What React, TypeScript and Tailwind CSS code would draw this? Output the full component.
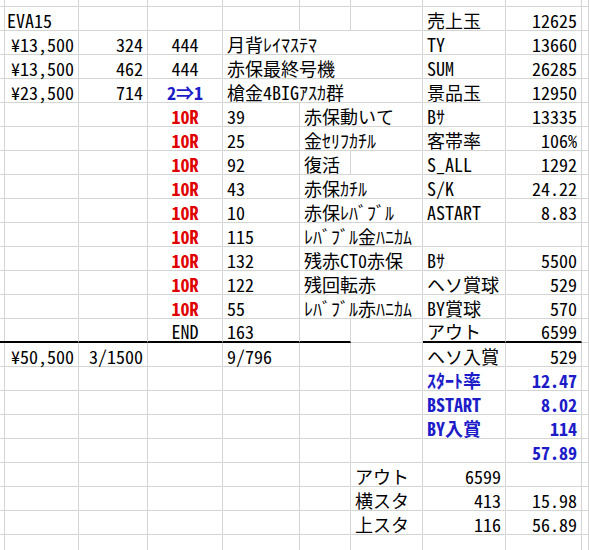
import type { ReactNode } from 'react';

type Align = 'l' | 'r' | 'c';
type CellDef = {
  c: number; // start column index (0-based)
  span?: 1 | 2 | 3;
  text?: ReactNode;
  align?: Align;
  tone?: 'red' | 'blue';
};

const COLS = 10; // pad, A..H, tail
const SPAN = { 1: 'col-span-1', 2: 'col-span-2', 3: 'col-span-3' } as const;

const ROWS: { h: string; cells: CellDef[]; thick?: number[] }[] = [
  { h: 'h-[7px]', cells: [] },
  { h: 'h-[24px]', cells: [{ c: 1, text: 'EVA15', align: 'l' }, { c: 7, text: '売上玉', align: 'l' }, { c: 8, text: '12625' }] },
  {
    h: 'h-[24px]',
    cells: [
      { c: 1, text: '¥13,500' },
      { c: 2, text: '324' },
      { c: 3, text: '444', align: 'c' },
      { c: 4, span: 3, text: '月背ﾚｲﾏｽﾃﾏ', align: 'l' },
      { c: 7, text: 'TY', align: 'l' },
      { c: 8, text: '13660' },
    ],
  },
  {
    h: 'h-[24px]',
    cells: [
      { c: 1, text: '¥13,500' },
      { c: 2, text: '462' },
      { c: 3, text: '444', align: 'c' },
      { c: 4, span: 3, text: '赤保最終号機', align: 'l' },
      { c: 7, text: 'SUM', align: 'l' },
      { c: 8, text: '26285' },
    ],
  },
  {
    h: 'h-[24px]',
    cells: [
      { c: 1, text: '¥23,500' },
      { c: 2, text: '714' },
      { c: 3, text: '2⇒1', align: 'c', tone: 'blue' },
      { c: 4, span: 3, text: '槍金4BIGｱｽｶ群', align: 'l' },
      { c: 7, text: '景品玉', align: 'l' },
      { c: 8, text: '12950' },
    ],
  },
  { h: 'h-[24px]', cells: round('39', '赤保動いて', true, 'Bｻ', '13335') },
  { h: 'h-[24px]', cells: round('25', '金ｾﾘﾌｶﾁﾙ', true, '客帯率', '106%') },
  { h: 'h-[24px]', cells: round('92', '復活', false, 'S_ALL', '1292') },
  { h: 'h-[24px]', cells: round('43', '赤保ｶﾁﾙ', true, 'S/K', '24.22') },
  { h: 'h-[24px]', cells: round('10', '赤保ﾚﾊﾞﾌﾞﾙ', true, 'ASTART', '8.83') },
  { h: 'h-[24px]', cells: round('115', 'ﾚﾊﾞﾌﾞﾙ金ﾊﾆｶﾑ', true, '', '') },
  { h: 'h-[24px]', cells: round('132', '残赤CT0赤保', true, 'Bｻ', '5500') },
  { h: 'h-[24px]', cells: round('122', '残回転赤', true, 'ヘソ賞球', '529') },
  { h: 'h-[24px]', cells: round('55', 'ﾚﾊﾞﾌﾞﾙ赤ﾊﾆｶﾑ', true, 'BY賞球', '570') },
  {
    h: 'h-[24px]',
    thick: [0, 1, 2, 3, 4, 5, 7, 8],
    cells: [
      { c: 3, text: 'END', align: 'c' },
      { c: 4, text: '163', align: 'l' },
      { c: 7, text: 'アウト', align: 'l' },
      { c: 8, text: '6599' },
    ],
  },
  {
    h: 'h-[24px]',
    cells: [
      { c: 1, text: '¥50,500' },
      { c: 2, text: '3/1500' },
      { c: 4, text: '9/796', align: 'l' },
      { c: 7, text: 'ヘソ入賞', align: 'l' },
      { c: 8, text: '529' },
    ],
  },
  { h: 'h-[24px]', cells: [{ c: 7, text: 'ｽﾀｰﾄ率', align: 'l', tone: 'blue' }, { c: 8, text: '12.47', tone: 'blue' }] },
  { h: 'h-[24px]', cells: [{ c: 7, text: 'BSTART', align: 'l', tone: 'blue' }, { c: 8, text: '8.02', tone: 'blue' }] },
  { h: 'h-[24px]', cells: [{ c: 7, text: 'BY入賞', align: 'l', tone: 'blue' }, { c: 8, text: '114', tone: 'blue' }] },
  { h: 'h-[24px]', cells: [{ c: 8, text: '57.89', tone: 'blue' }] },
  { h: 'h-[24px]', cells: [{ c: 6, text: 'アウト', align: 'l' }, { c: 7, text: '6599' }] },
  { h: 'h-[24px]', cells: [{ c: 6, text: '横スタ', align: 'l' }, { c: 7, text: '413' }, { c: 8, text: '15.98' }] },
  { h: 'h-[24px]', cells: [{ c: 6, text: '上スタ', align: 'l' }, { c: 7, text: '116' }, { c: 8, text: '56.89' }] },
  { h: 'h-[24px]', cells: [] },
];

function round(n: string, memo: string, wide: boolean, label: string, val: string): CellDef[] {
  return [
    { c: 3, text: '10R', align: 'c', tone: 'red' },
    { c: 4, text: n, align: 'l' },
    { c: 5, span: wide ? 2 : 1, text: memo, align: 'l' },
    { c: 7, text: label, align: 'l' },
    { c: 8, text: val },
  ];
}

function Row({ h, cells, thick = [] }: { h: string; cells: CellDef[]; thick?: number[] }) {
  // fill the gaps with empty single cells
  const filled: CellDef[] = [];
  let i = 0;
  while (i < COLS) {
    const hit = cells.find((x) => x.c === i);
    if (hit) {
      filled.push(hit);
      i += hit.span ?? 1;
    } else {
      filled.push({ c: i });
      i += 1;
    }
  }

  return (
    <div className={`grid shrink-0 grid-cols-[3px_76px_69px_75px_77px_51px_72px_83px_76px_7px] ${h}`}>
      {filled.map((cell) => {
        const align = cell.align ?? 'r';
        return (
          <div
            key={cell.c}
            className={[
              'flex min-w-0 items-end whitespace-nowrap border-r border-[#d4d4d4]',
              SPAN[cell.span ?? 1],
              thick.includes(cell.c) ? 'border-b-2 border-b-black' : 'border-b',
              align === 'l' ? 'justify-start pl-[4px]' : align === 'c' ? 'justify-center' : 'justify-end pr-[4px]',
              cell.tone === 'red' ? 'font-bold text-[#e00000]' : cell.tone === 'blue' ? 'font-bold text-[#1c1cc8]' : 'text-black',
            ].join(' ')}
          >
            {cell.text}
          </div>
        );
      })}
    </div>
  );
}

export default function App() {
  return (
    <div className="flex h-[550px] w-[589px] flex-col overflow-hidden bg-white font-['Noto_Sans_Mono_CJK_JP','Noto_Sans_CJK_JP',sans-serif] text-[18px] leading-[20px]">
      {ROWS.map((r, idx) => (
        <Row key={idx} h={r.h} cells={r.cells} thick={r.thick} />
      ))}
    </div>
  );
}
